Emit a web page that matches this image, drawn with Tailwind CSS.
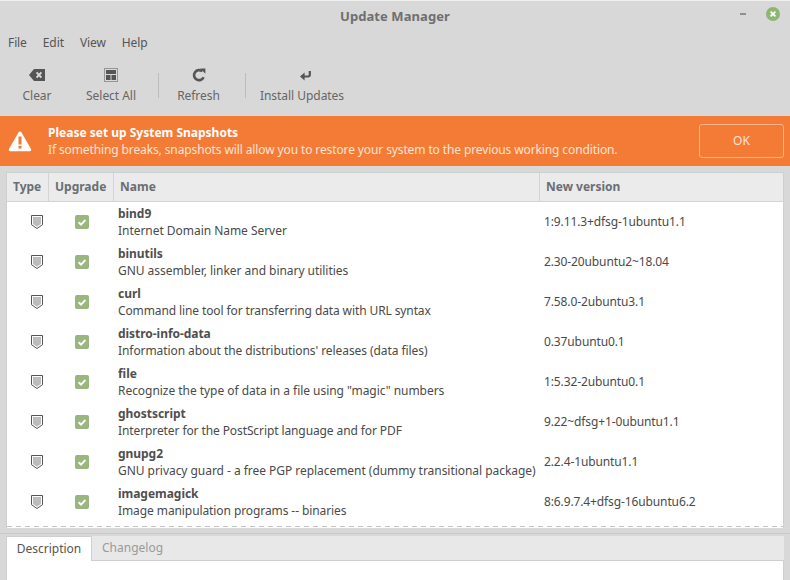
<!DOCTYPE html>
<html><head><meta charset="utf-8">
<script src="https://cdn.jsdelivr.net/npm/@tailwindcss/browser@4"></script>
</head>
<body class="m-0">
<div class="w-[790px] h-[580px] overflow-hidden bg-[#d8d8d8] flex flex-col font-['Noto_Sans',sans-serif] text-[12px] leading-[16px] text-[#4a4a4a]">
  <!-- titlebar -->
  <div class="h-[29px] shrink-0 border-t border-[#f0f0f0] relative flex items-center justify-center">
    <span class="font-bold text-[13px] tracking-[0.08px] text-[#6f6f6f] mt-[1px]">Update Manager</span>
    <div class="absolute left-[740px] top-[12px] w-[6px] h-[2px] bg-[#8f8f8f]"></div>
    <svg class="absolute left-[766px] top-[6px]" width="14" height="14" viewBox="0 0 14 14"><circle cx="7" cy="7" r="7" fill="#8fb573"/><path d="M4.6 4.6l4.8 4.8M9.4 4.6l-4.8 4.8" stroke="#fff" stroke-width="1.8"/></svg>
  </div>
  <!-- menu -->
  <div class="h-[27px] shrink-0 flex items-center pl-[8px] gap-[16px] tracking-[-0.1px] text-[#555]">
    <span>File</span><span>Edit</span><span>View</span><span>Help</span>
  </div>
  <!-- toolbar -->
  <div class="h-[60px] shrink-0 flex items-start text-[#666] tracking-[-0.04px]">
    <div class="ml-[22px] w-[30px] flex flex-col items-center pt-[13px]">
      <svg width="16" height="12" viewBox="0 0 16 12"><path d="M5 0h11v12H5L0 6z" fill="#555"/><path d="M7.6 3.4l4.8 5.2M12.4 3.4L7.6 8.6" stroke="#d8d8d8" stroke-width="2"/></svg>
      <span class="mt-[7px]">Clear</span>
    </div>
    <div class="ml-[33px] w-[52px] flex flex-col items-center pt-[13px]">
      <svg width="14" height="14" viewBox="0 0 14 14" class="-mt-[1px]"><rect x="0.5" y="0.5" width="13" height="13" fill="none" stroke="#555" stroke-dasharray="1 1"/><rect x="2" y="2" width="10" height="4" fill="#555"/><rect x="2" y="7" width="4.5" height="5" fill="#555"/><rect x="7.5" y="7" width="4.5" height="5" fill="#555"/></svg>
      <span class="mt-[6px] whitespace-nowrap">Select All</span>
    </div>
    <div class="ml-[21px] mt-[17px] w-px h-[25px] bg-[#bdbdbd]"></div>
    <div class="ml-[18px] w-[43px] flex flex-col items-center pt-[13px]">
      <svg width="14" height="14" viewBox="0 0 14 14" class="-mt-[1px]"><path d="M11.6 9.2A5 5 0 1 1 10.4 3.4" fill="none" stroke="#555" stroke-width="2.6"/><path d="M8.2 0.6h5.2v5.2z" fill="#555"/></svg>
      <span class="mt-[6px]">Refresh</span>
    </div>
    <div class="ml-[25px] mt-[17px] w-px h-[25px] bg-[#bdbdbd]"></div>
    <div class="ml-[14px] w-[84px] flex flex-col items-center pt-[13px]">
      <svg width="11" height="10" viewBox="0 0 11 10" class="mt-[2px] ml-[7px]"><path d="M9.8 0v4a1.5 1.5 0 0 1-1.5 1.5H3" fill="none" stroke="#555" stroke-width="2.2"/><path d="M4.6 1.6L0 5.5l4.6 4z" fill="#555"/></svg>
      <span class="mt-[7px] whitespace-nowrap">Install Updates</span>
    </div>
  </div>
  <!-- banner -->
  <div class="h-[50px] shrink-0 bg-[#f47b36] flex items-center text-white pl-[8px] pr-[6px]">
    <svg width="24" height="22" viewBox="0 0 24 22" class="shrink-0"><path d="M12 1.5a1.6 1.6 0 0 1 1.4.8l9.6 16.6a1.6 1.6 0 0 1-1.4 2.4H2.4A1.6 1.6 0 0 1 1 18.9L10.6 2.3a1.6 1.6 0 0 1 1.4-.8z" fill="#fff"/><rect x="10.5" y="6.5" width="3" height="8" fill="#f47b36"/><rect x="10.5" y="15.8" width="3" height="2.8" fill="#f47b36"/></svg>
    <div class="ml-[16px] flex-1 flex flex-col">
      <span class="font-bold">Please set up System Snapshots</span>
      <span class="text-[#fde4d4] mt-[1px] tracking-[-0.116px]">If something breaks, snapshots will allow you to restore your system to the previous working condition.</span>
    </div>
    <div class="w-[85px] h-[34px] border border-[#f9b48c] rounded-[3px] flex items-center justify-center text-[#fde4d4]">OK</div>
  </div>
  <!-- table -->
  <div class="mt-[6px] mx-[6px] h-[356px] shrink-0 border border-[#cfcfcf] border-b-0 bg-white flex flex-col overflow-hidden">
    <div class="h-[29px] shrink-0 flex bg-[#ebebeb] border-b border-[#d4d4d4] font-bold text-[#6a6e73]">
      <div class="w-[42px] pl-[6px] flex items-center border-r border-[#d4d4d4]">Type</div>
      <div class="w-[65px] pl-[6px] flex items-center border-r border-[#d4d4d4]">Upgrade</div>
      <div class="w-[426px] pl-[6px] flex items-center border-r border-[#d4d4d4]">Name</div>
      <div class="pl-[6px] flex items-center">New version</div>
    </div>
    <div class="flex flex-col">
      <div class="h-[40px] flex items-center"><div class="w-[42px] flex justify-start pl-[24px]"><svg width="12" height="14" viewBox="0 0 12 14"><path d="M.5.5h11v9.2L6 13.5.5 9.7z" fill="#fff" stroke="#555"/><path d="M2 2h8v6.9L6 11.7 2 8.9z" fill="#bdbdbd"/></svg></div><div class="w-[65px] flex justify-center"><svg width="14" height="14" viewBox="0 0 14 14"><rect width="14" height="14" rx="2" fill="#98b67e"/><path d="M3.6 7.2l2.4 2.4 4.4-4.6" fill="none" stroke="#fff" stroke-width="2"/></svg></div><div class="w-[426px] pl-[4px] whitespace-nowrap tracking-[-0.04px]"><div class="font-bold text-[#4f4f4f]">bind9</div><div class="mt-[1px]">Internet Domain Name Server</div></div><div class="pl-[4px] tracking-[-0.12px]">1:9.11.3+dfsg-1ubuntu1.1</div></div>
      <div class="h-[40px] flex items-center"><div class="w-[42px] flex justify-start pl-[24px]"><svg width="12" height="14" viewBox="0 0 12 14"><path d="M.5.5h11v9.2L6 13.5.5 9.7z" fill="#fff" stroke="#555"/><path d="M2 2h8v6.9L6 11.7 2 8.9z" fill="#bdbdbd"/></svg></div><div class="w-[65px] flex justify-center"><svg width="14" height="14" viewBox="0 0 14 14"><rect width="14" height="14" rx="2" fill="#98b67e"/><path d="M3.6 7.2l2.4 2.4 4.4-4.6" fill="none" stroke="#fff" stroke-width="2"/></svg></div><div class="w-[426px] pl-[4px] whitespace-nowrap tracking-[-0.04px]"><div class="font-bold text-[#4f4f4f]">binutils</div><div class="mt-[1px]">GNU assembler, linker and binary utilities</div></div><div class="pl-[4px] tracking-[-0.12px]">2.30-20ubuntu2~18.04</div></div>
      <div class="h-[40px] flex items-center"><div class="w-[42px] flex justify-start pl-[24px]"><svg width="12" height="14" viewBox="0 0 12 14"><path d="M.5.5h11v9.2L6 13.5.5 9.7z" fill="#fff" stroke="#555"/><path d="M2 2h8v6.9L6 11.7 2 8.9z" fill="#bdbdbd"/></svg></div><div class="w-[65px] flex justify-center"><svg width="14" height="14" viewBox="0 0 14 14"><rect width="14" height="14" rx="2" fill="#98b67e"/><path d="M3.6 7.2l2.4 2.4 4.4-4.6" fill="none" stroke="#fff" stroke-width="2"/></svg></div><div class="w-[426px] pl-[4px] whitespace-nowrap tracking-[-0.04px]"><div class="font-bold text-[#4f4f4f]">curl</div><div class="mt-[1px] tracking-[-0.11px]">Command line tool for transferring data with URL syntax</div></div><div class="pl-[4px] tracking-[-0.12px]">7.58.0-2ubuntu3.1</div></div>
      <div class="h-[40px] flex items-center"><div class="w-[42px] flex justify-start pl-[24px]"><svg width="12" height="14" viewBox="0 0 12 14"><path d="M.5.5h11v9.2L6 13.5.5 9.7z" fill="#fff" stroke="#555"/><path d="M2 2h8v6.9L6 11.7 2 8.9z" fill="#bdbdbd"/></svg></div><div class="w-[65px] flex justify-center"><svg width="14" height="14" viewBox="0 0 14 14"><rect width="14" height="14" rx="2" fill="#98b67e"/><path d="M3.6 7.2l2.4 2.4 4.4-4.6" fill="none" stroke="#fff" stroke-width="2"/></svg></div><div class="w-[426px] pl-[4px] whitespace-nowrap tracking-[-0.04px]"><div class="font-bold text-[#4f4f4f]">distro-info-data</div><div class="mt-[1px] tracking-[-0.075px]">Information about the distributions' releases (data files)</div></div><div class="pl-[4px] tracking-[-0.12px]">0.37ubuntu0.1</div></div>
      <div class="h-[40px] flex items-center"><div class="w-[42px] flex justify-start pl-[24px]"><svg width="12" height="14" viewBox="0 0 12 14"><path d="M.5.5h11v9.2L6 13.5.5 9.7z" fill="#fff" stroke="#555"/><path d="M2 2h8v6.9L6 11.7 2 8.9z" fill="#bdbdbd"/></svg></div><div class="w-[65px] flex justify-center"><svg width="14" height="14" viewBox="0 0 14 14"><rect width="14" height="14" rx="2" fill="#98b67e"/><path d="M3.6 7.2l2.4 2.4 4.4-4.6" fill="none" stroke="#fff" stroke-width="2"/></svg></div><div class="w-[426px] pl-[4px] whitespace-nowrap tracking-[-0.04px]"><div class="font-bold text-[#4f4f4f]">file</div><div class="mt-[1px]">Recognize the type of data in a file using "magic" numbers</div></div><div class="pl-[4px] tracking-[-0.12px]">1:5.32-2ubuntu0.1</div></div>
      <div class="h-[40px] flex items-center"><div class="w-[42px] flex justify-start pl-[24px]"><svg width="12" height="14" viewBox="0 0 12 14"><path d="M.5.5h11v9.2L6 13.5.5 9.7z" fill="#fff" stroke="#555"/><path d="M2 2h8v6.9L6 11.7 2 8.9z" fill="#bdbdbd"/></svg></div><div class="w-[65px] flex justify-center"><svg width="14" height="14" viewBox="0 0 14 14"><rect width="14" height="14" rx="2" fill="#98b67e"/><path d="M3.6 7.2l2.4 2.4 4.4-4.6" fill="none" stroke="#fff" stroke-width="2"/></svg></div><div class="w-[426px] pl-[4px] whitespace-nowrap tracking-[-0.04px]"><div class="font-bold text-[#4f4f4f]">ghostscript</div><div class="mt-[1px] tracking-[-0.1px]">Interpreter for the PostScript language and for PDF</div></div><div class="pl-[4px] tracking-[-0.12px]">9.22~dfsg+1-0ubuntu1.1</div></div>
      <div class="h-[40px] flex items-center"><div class="w-[42px] flex justify-start pl-[24px]"><svg width="12" height="14" viewBox="0 0 12 14"><path d="M.5.5h11v9.2L6 13.5.5 9.7z" fill="#fff" stroke="#555"/><path d="M2 2h8v6.9L6 11.7 2 8.9z" fill="#bdbdbd"/></svg></div><div class="w-[65px] flex justify-center"><svg width="14" height="14" viewBox="0 0 14 14"><rect width="14" height="14" rx="2" fill="#98b67e"/><path d="M3.6 7.2l2.4 2.4 4.4-4.6" fill="none" stroke="#fff" stroke-width="2"/></svg></div><div class="w-[426px] pl-[4px] whitespace-nowrap tracking-[-0.04px]"><div class="font-bold text-[#4f4f4f]">gnupg2</div><div class="mt-[1px]">GNU privacy guard - a free PGP replacement (dummy transitional package)</div></div><div class="pl-[4px] tracking-[-0.12px]">2.2.4-1ubuntu1.1</div></div>
      <div class="h-[40px] flex items-center"><div class="w-[42px] flex justify-start pl-[24px]"><svg width="12" height="14" viewBox="0 0 12 14"><path d="M.5.5h11v9.2L6 13.5.5 9.7z" fill="#fff" stroke="#555"/><path d="M2 2h8v6.9L6 11.7 2 8.9z" fill="#bdbdbd"/></svg></div><div class="w-[65px] flex justify-center"><svg width="14" height="14" viewBox="0 0 14 14"><rect width="14" height="14" rx="2" fill="#98b67e"/><path d="M3.6 7.2l2.4 2.4 4.4-4.6" fill="none" stroke="#fff" stroke-width="2"/></svg></div><div class="w-[426px] pl-[4px] whitespace-nowrap tracking-[-0.04px]"><div class="font-bold text-[#4f4f4f]">imagemagick</div><div class="mt-[1px] tracking-[-0.09px]">Image manipulation programs -- binaries</div></div><div class="pl-[4px] tracking-[-0.12px]">8:6.9.7.4+dfsg-16ubuntu6.2</div></div>
    </div>
    <div class="mt-[4px] h-px bg-[repeating-linear-gradient(90deg,#c4c4c4_0_5px,transparent_5px_9px)]"></div>
  </div>
  <div class="mt-[5px] h-px shrink-0 bg-[#c8c8c8]"></div>
  <!-- notebook -->
  <div class="mt-[2px] mx-[6px] flex-1 flex flex-col border-x border-[#cfcfcf]">
    <div class="h-[25px] shrink-0 flex border-b border-[#cfcfcf] bg-[#e8e8e8] -mx-px">
      <div class="w-[86px] h-[25px] bg-white border border-b-0 border-[#cfcfcf] flex items-center justify-center text-[#555]">Description</div>
      <div class="ml-[10px] flex items-center text-[#9a9a9a]">Changelog</div>
    </div>
    <div class="flex-1 bg-white"></div>
  </div>
</div>
</body></html>
